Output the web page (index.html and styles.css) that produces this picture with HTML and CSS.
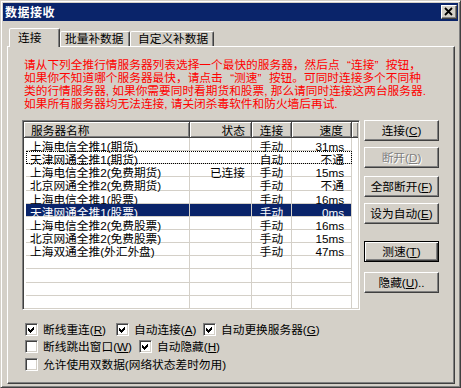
FILE: index.html
```html
<!DOCTYPE html>
<html lang="zh-CN">
<head>
<meta charset="utf-8">
<title>数据接收</title>
<link rel="stylesheet" href="styles.css">
</head>
<body>
<div class="window">
  <div class="titlebar">
    <span class="title">数据接收</span>
    <span class="close-btn"><svg width="14" height="12" viewBox="0 0 14 12"><path d="M3 2 L10 9 M10 2 L3 9" stroke="#000" stroke-width="1.8" fill="none"/></svg></span>
  </div>
  <div class="tabs">
    <div class="tab tab-active t1">连接</div>
    <div class="tab t2">批量补数据</div>
    <div class="tab t3">自定义补数据</div>
  </div>
  <div class="panel">
    <p class="notice">请从下列全推行情服务器列表选择一个最快的服务器，然后点<span class="q-open">“</span>连接<span class="q-close">”</span>按钮，<br>如果你不知道哪个服务器最快，请点击<span class="q-open">“</span>测速<span class="q-close">”</span>按钮。可同时连接多个不同种<br>类的行情服务器, 如果你需要同时看期货和股票, 那么请同时连接这两台服务器.<br>如果所有服务器均无法连接, 请关闭杀毒软件和防火墙后再试.</p>
    <div class="main">
      <div class="listview">
        <div class="lv-head">
          <div class="hc h-name">服务器名称</div>
          <div class="hc h-state">状态</div>
          <div class="hc h-conn">连接</div>
          <div class="hc h-speed">速度</div>
          <div class="hc h-fill"></div>
        </div>
        <div class="lv-body">
          <div class="row"><span class="cell c-name">上海电信全推1(期货)</span><span class="cell c-state"></span><span class="cell c-conn">手动</span><span class="cell c-speed">31ms</span></div>
          <div class="row focus"><span class="cell c-name">天津网通全推1(期货)</span><span class="cell c-state"></span><span class="cell c-conn">自动</span><span class="cell c-speed">不通</span></div>
          <div class="row"><span class="cell c-name">上海电信全推2(免费期货)</span><span class="cell c-state">已连接</span><span class="cell c-conn">手动</span><span class="cell c-speed">15ms</span></div>
          <div class="row"><span class="cell c-name">北京网通全推2(免费期货)</span><span class="cell c-state"></span><span class="cell c-conn">手动</span><span class="cell c-speed">不通</span></div>
          <div class="row"><span class="cell c-name">上海电信全推1(股票)</span><span class="cell c-state"></span><span class="cell c-conn">手动</span><span class="cell c-speed">16ms</span></div>
          <div class="row selected"><span class="cell c-name">天津网通全推1(股票)</span><span class="cell c-state"></span><span class="cell c-conn">手动</span><span class="cell c-speed">0ms</span></div>
          <div class="row"><span class="cell c-name">上海电信全推2(免费股票)</span><span class="cell c-state"></span><span class="cell c-conn">手动</span><span class="cell c-speed">16ms</span></div>
          <div class="row"><span class="cell c-name">北京网通全推2(免费股票)</span><span class="cell c-state"></span><span class="cell c-conn">手动</span><span class="cell c-speed">15ms</span></div>
          <div class="row"><span class="cell c-name">上海双通全推(外汇外盘)</span><span class="cell c-state"></span><span class="cell c-conn">手动</span><span class="cell c-speed">47ms</span></div>
          <div class="row"><span class="cell c-name"></span><span class="cell c-state"></span><span class="cell c-conn"></span><span class="cell c-speed"></span></div>
          <div class="row"><span class="cell c-name"></span><span class="cell c-state"></span><span class="cell c-conn"></span><span class="cell c-speed"></span></div>
          <div class="row"><span class="cell c-name"></span><span class="cell c-state"></span><span class="cell c-conn"></span><span class="cell c-speed"></span></div>
          <div class="row"><span class="cell c-name"></span><span class="cell c-state"></span><span class="cell c-conn"></span><span class="cell c-speed"></span></div>
        </div>
      </div>
      <div class="buttons">
        <div class="btn">连接(<u>C</u>)</div>
        <div class="btn btn-disabled b-disconnect">断开(<u>D</u>)</div>
        <div class="btn b-all">全部断开(<u>F</u>)</div>
        <div class="btn b-auto">设为自动(<u>E</u>)</div>
        <div class="btn btn-default b-test">测速(<u>T</u>)</div>
        <div class="btn b-hide">隐藏(<u>U</u>)..</div>
      </div>
    </div>
    <div class="options">
      <div class="opt-row">
        <div class="opt w91"><span class="cb"><svg width="11" height="11" viewBox="0 0 11 11"><polygon points="2,4 4,6 8,2 8,5 4,9 2,7" fill="#000" shape-rendering="crispEdges"/></svg></span><span class="lbl">断线重连(<u>R</u>)</span></div>
        <div class="opt w87"><span class="cb"><svg width="11" height="11" viewBox="0 0 11 11"><polygon points="2,4 4,6 8,2 8,5 4,9 2,7" fill="#000" shape-rendering="crispEdges"/></svg></span><span class="lbl">自动连接(<u>A</u>)</span></div>
        <div class="opt"><span class="cb"><svg width="11" height="11" viewBox="0 0 11 11"><polygon points="2,4 4,6 8,2 8,5 4,9 2,7" fill="#000" shape-rendering="crispEdges"/></svg></span><span class="lbl">自动更换服务器(<u>G</u>)</span></div>
      </div>
      <div class="opt-row row2">
        <div class="opt w114"><span class="cb"></span><span class="lbl">断线跳出窗口(<u>W</u>)</span></div>
        <div class="opt"><span class="cb"><svg width="11" height="11" viewBox="0 0 11 11"><polygon points="2,4 4,6 8,2 8,5 4,9 2,7" fill="#000" shape-rendering="crispEdges"/></svg></span><span class="lbl">自动隐藏(<u>H</u>)</span></div>
      </div>
      <div class="opt-row row3">
        <div class="opt"><span class="cb"></span><span class="lbl">允许使用双数据(网络状态差时勿用)</span></div>
      </div>
    </div>
  </div>
</div>
</body>
</html>
```
FILE: styles.css
```css
body {
  margin: 0;
  background: #d4d0c8;
  font-family: "Liberation Sans", "Noto Sans CJK SC", sans-serif;
  font-size: 11.7px;
  color: #000;
}

.window {
  width: 461px;
  height: 388px;
  box-sizing: border-box;
  border: 1px solid;
  border-color: #d4d0c8 #404040 #404040 #d4d0c8;
  box-shadow: inset 1px 1px #fff, inset -1px -1px #808080;
  padding: 2px;
  background: #d4d0c8;
}

.titlebar {
  height: 18px;
  background: #0a246a;
  display: flex;
  align-items: center;
  justify-content: space-between;
}

.title {
  color: #fff;
  font-family: "Noto Sans CJK SC", sans-serif;
  font-size: 12px;
  font-weight: 700;
  padding-left: 2px;
  letter-spacing: 0.5px;
  line-height: 18px;
}

.close-btn {
  width: 16px;
  height: 14px;
  box-sizing: border-box;
  border: 1px solid;
  border-color: #fff #404040 #404040 #fff;
  box-shadow: inset -1px -1px #808080;
  background: #d4d0c8;
  margin-right: 1px;
  display: flex;
}

.tabs {
  display: flex;
  align-items: flex-end;
  height: 18px;
  margin: 7px 0 0 4px;
  padding-left: 2px;
}

.tab {
  box-sizing: border-box;
  height: 15px;
  border: 1px solid;
  border-bottom: none;
  border-color: #fff #404040 transparent #fff;
  box-shadow: inset -1px 0 #808080;
  border-radius: 2px 2px 0 0;
  line-height: 13px;
  white-space: nowrap;
  background: #d4d0c8;
}

.tab-active {
  height: 19px;
  margin-bottom: -1px;
  position: relative;
  z-index: 1;
  padding-top: 2px;
}

.t1 { width: 51px; padding-left: 8px; }
.t2 { width: 70px; padding-left: 4px; }
.t3 { width: 84px; padding-left: 7px; }

.panel {
  box-sizing: border-box;
  width: 448px;
  height: 338px;
  margin-left: 4px;
  border: 1px solid;
  border-color: #fff #404040 #404040 #fff;
  box-shadow: inset -1px -1px #808080;
  padding: 11px 0 0 14px;
}

.notice {
  margin: 0 0 0 2px;
  color: #ff0000;
  line-height: 13.1px;
  white-space: nowrap;
}

.q-open { margin-left: 7.5px; }
.q-close { margin-right: 7.5px; }

.main {
  display: flex;
  align-items: flex-start;
  gap: 4px;
  margin-top: 9.6px;
}

.listview {
  width: 338px;
  height: 190px;
  box-sizing: border-box;
  border: 1px solid;
  border-color: #808080 #fff #fff #808080;
  box-shadow: inset 1px 1px #404040, inset -1px -1px #d4d0c8;
  padding: 1px;
  background: #fff;
  display: flex;
  flex-direction: column;
}

.lv-head {
  display: flex;
  height: 16px;
  flex: none;
  background: #d4d0c8;
}

.hc {
  box-sizing: border-box;
  height: 16px;
  border-right: 1px solid #404040;
  border-bottom: 1px solid #404040;
  box-shadow: inset 1px 1px #fff, inset -1px -1px #808080;
  padding-top: 2px;
  line-height: 13px;
  white-space: nowrap;
}

.h-name { width: 166px; padding-left: 7px; }
.h-state { width: 62px; text-align: right; padding-right: 6px; }
.h-conn { width: 40px; text-align: center; }
.h-speed { width: 60px; text-align: right; padding-right: 8px; }
.h-fill { flex: 1; border-right: none; }

.lv-body {
  flex: 1;
  overflow: hidden;
  padding-left: 2px;
}

.row {
  display: grid;
  grid-template-columns: 164px 62px 40px 60px;
  grid-template-rows: 13.15px;
  width: 326px;
  height: 13.15px;
}

.cell {
  box-sizing: border-box;
  border-right: 1px solid #d4d0c8;
  border-bottom: 1px solid #d4d0c8;
  line-height: 13px;
  padding-top: 2px;
  white-space: nowrap;
}

.c-name { padding-left: 4px; }
.c-state { text-align: right; padding-right: 6px; }
.c-conn { text-align: center; }
.c-speed { text-align: right; padding-right: 7px; }

.row.selected .cell {
  background: #0a246a;
  color: #fff;
}

.row.focus {
  outline: 1px dotted #000;
  outline-offset: -1px;
}

.buttons {
  display: flex;
  flex-direction: column;
  width: 75px;
}

.btn {
  box-sizing: border-box;
  height: 21px;
  border: 1px solid;
  border-color: #fff #404040 #404040 #fff;
  box-shadow: inset -1px -1px #808080;
  text-align: center;
  line-height: 19px;
  white-space: nowrap;
}

.btn-default {
  border-color: #000;
  box-shadow: inset 1px 1px #fff, inset -1px -1px #404040, inset -2px -2px #808080;
}

.btn-disabled {
  color: #808080;
  text-shadow: 1px 1px 0 #fff;
}

.b-disconnect { margin-top: 6px; }
.b-all { margin-top: 8px; }
.b-auto { margin-top: 6px; }
.b-test { margin-top: 17px; }
.b-hide { margin-top: 10px; }

.options {
  margin: 13px 0 0 3px;
}

.opt-row {
  display: flex;
  height: 13px;
  align-items: center;
}

.row2 { margin-top: 4px; }
.row3 { margin-top: 5px; }

.opt {
  display: flex;
  align-items: center;
}

.w91 { width: 91px; }
.w87 { width: 87px; }
.w114 { width: 114px; }

.cb {
  width: 13px;
  height: 13px;
  box-sizing: border-box;
  border: 1px solid;
  border-color: #808080 #fff #fff #808080;
  box-shadow: inset 1px 1px #404040, inset -1px -1px #d4d0c8;
  background: #fff;
  flex: none;
  display: flex;
}

.lbl {
  margin-left: 5px;
  line-height: 13px;
  white-space: nowrap;
}
```
